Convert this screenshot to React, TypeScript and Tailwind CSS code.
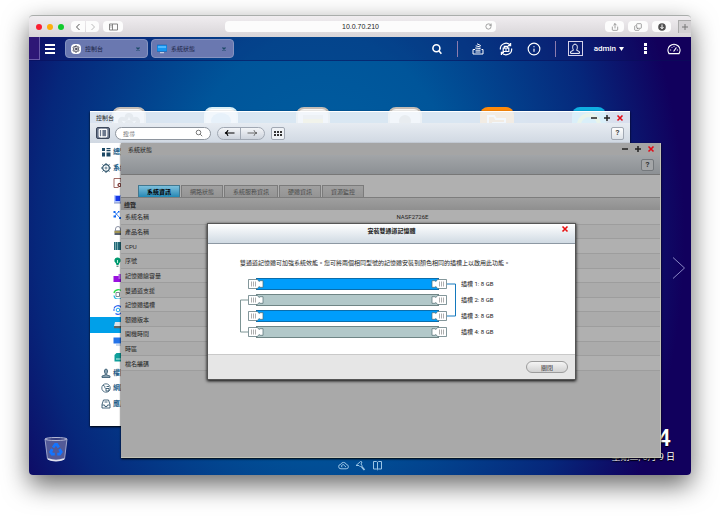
import type { ReactNode } from 'react';
import { Copy, Info, PanelLeft, RotateCw, Settings, Share } from 'lucide-react';

const systemRows = [
  { label: '系統名稱', value: 'NASF2726E' },
  { label: '產品名稱', value: '' },
  { label: 'CPU', value: '' },
  { label: '序號', value: '' },
  { label: '記憶體總容量', value: '' },
  { label: '雙通道支援', value: '' },
  { label: '記憶體插槽', value: '' },
  { label: '韌體版本', value: '' },
  { label: '開機時間', value: '' },
  { label: '時區', value: '' },
  { label: '檔名編碼', value: '' },
];

const tabs = ['系統資訊', '網路狀態', '系統服務資訊', '硬體資訊', '資源監控'];

const slots = ['插槽 1: 8 GB', '插槽 2: 8 GB', '插槽 3: 8 GB', '插槽 4: 8 GB'];

function Stroke({ d, className }: { d: string; className?: string }) {
  return (
    <svg viewBox="0 0 8 8" className={className} fill="none" stroke="currentColor">
      <path d={d} />
    </svg>
  );
}

function SafariBar() {
  return (
    <div className="flex h-[22px] items-center rounded-t border-t border-[#a9adab] bg-gradient-to-b from-[#f0edf0] to-[#d8d5d8]">
      <div className="flex w-[196px] shrink-0 items-center">
        <div className="flex gap-[5px] pl-[7px]">
          <span className="size-1.5 rounded-full bg-[#fb1f31]" />
          <span className="size-1.5 rounded-full bg-[#fdae0c]" />
          <span className="size-1.5 rounded-full bg-[#10ca2c]" />
        </div>
        <div className="ml-[7px] flex gap-px">
          <button aria-label="Back" className="flex h-[11px] w-3.5 items-center justify-center rounded-l-sm bg-[#fcfcfc] text-[#555]">
            <Stroke d="M5.500 1 2.500 4l3 3" className="size-2" />
          </button>
          <button aria-label="Forward" className="flex h-[11px] w-[13px] items-center justify-center rounded-r-sm bg-[#fcfcfc] text-[#bbb]">
            <Stroke d="m2.500 1 3 3-3 3" className="size-2" />
          </button>
        </div>
        <button aria-label="Sidebar" className="ml-1 flex h-[11px] w-5 items-center justify-center rounded-sm bg-[#fcfcfc] text-[#777]">
          <svg viewBox="0 0 9 8" className="h-2 w-[9px]" fill="none" stroke="currentColor" strokeWidth=".9">
            <path d="M.5 1h8v6h-8zM3.500 1v6M1.500 2.500h1M1.500 4h1" />
          </svg>
        </button>
      </div>
      <div className="relative flex h-[11px] flex-1 items-center">
        <input
          aria-label="Address"
          defaultValue="10.0.70.210"
          className="h-full w-full rounded-sm bg-[#fcfcfc] text-center font-['Liberation_Sans'] text-[7px] text-[#222]"
        />
        <button aria-label="Reload" className="absolute right-1 text-[#666]">
          <RotateCw className="size-[7px]" strokeWidth={2} />
        </button>
      </div>
      <div className="flex w-[195px] shrink-0 items-center justify-end gap-1">
        <button aria-label="Share" className="flex h-[11px] w-[19px] items-center justify-center rounded-sm bg-[#fcfcfc] text-[#777]">
          <Share className="size-2" strokeWidth={2} />
        </button>
        <button aria-label="Tabs" className="flex h-[11px] w-5 items-center justify-center rounded-sm bg-[#fcfcfc] text-[#777]">
          <Copy className="size-2 -scale-y-100" strokeWidth={2} />
        </button>
        <button aria-label="Downloads" className="flex h-[11px] w-[19px] items-center justify-center rounded-sm bg-[#fcfcfc]">
          <svg viewBox="0 0 8 8" className="size-2">
            <circle cx="4" cy="4" r="3.800" fill="#505050" />
            <path d="M4 1.500v4M2.500 4 4 5.800 5.500 4" stroke="#fff" fill="none" />
          </svg>
        </button>
        <button aria-label="New tab" className="ml-[3px] flex size-[13px] items-center justify-center self-end border-t border-l border-[#aaa] bg-[#d3d1d3] text-[#777]">
          <Stroke d="M4 1v6M1 4h6" className="size-2" />
        </button>
      </div>
    </div>
  );
}

function AppTab({ label, icon }: { label: string; icon: ReactNode }) {
  return (
    <div className="flex h-[19px] w-[83px] items-center rounded-sm border border-[#8593c0] bg-[#6a78b0] px-[5px] text-[#1a2344]">
      {icon}
      <span className="ml-1 flex-1 text-[6px]">{label}</span>
      <button aria-label={`Close ${label}`} className="text-[#1d4a68]">
        <Stroke d="m2.500 2.500 3 3m0-3-3 3" className="size-2 stroke-[1.300]" />
      </button>
    </div>
  );
}

function TopBar() {
  return (
    <header className="relative flex h-6 items-center border-b border-[#06105a]/50 bg-[#120055]/20 text-white">
      <span className="h-full w-[11px] border-r border-b border-[#6a5aa8] bg-[#2e1776]" />
      <button aria-label="Menu" className="mr-2 ml-[5px] flex h-3 w-3 flex-col justify-center gap-[2px]">
        <span className="h-[2px] w-[10px] bg-white" />
        <span className="h-[2px] w-[10px] bg-white" />
        <span className="h-[2px] w-[10px] bg-white" />
      </button>
      <div className="flex gap-[3px]">
        <AppTab
          label="控制台"
          icon={
            <span className="flex size-[10px] items-center justify-center rounded-sm bg-white text-[#223]">
              <Settings className="size-2" strokeWidth={2.5} />
            </span>
          }
        />
        <AppTab
          label="系統狀態"
          icon={
            <svg viewBox="0 0 10 10" className="size-[10px]">
              <rect x="0" y="1" width="10" height="6.500" rx=".6" fill="#1697f2" stroke="#125fae" strokeWidth=".6" />
              <path d="M1 2h8v2H1z" fill="#4fb8ff" />
              <path d="M3 8.700h4" stroke="#c5cbe0" strokeWidth="1.200" />
            </svg>
          }
        />
      </div>
      <div className="flex flex-1 items-center justify-end pr-[10px]">
        <button aria-label="Search">
          <svg viewBox="0 0 12 12" className="size-3" fill="none" stroke="currentColor" strokeWidth="1.600">
            <circle cx="5.400" cy="5.200" r="3.500" />
            <path d="m7.800 7.800 2.600 3" />
          </svg>
        </button>
        <span className="mx-[14px] h-4 w-px self-end bg-[#8c7cae]" />
        <button aria-label="Background tasks">
          <svg viewBox="0 0 12 12" className="size-3" fill="none" stroke="currentColor">
            <path d="M3 6.500H1v4.500h10V6.500H9.500" />
            <path d="M3.500 9h5M3.500 7.200h5M3.200 5l5.300.5M3.700 2.800l4.800 1.200M5 .8l3.800 1.800" />
          </svg>
        </button>
        <button aria-label="External devices" className="ml-[15px]">
          <svg viewBox="0 0 14 14" className="size-[14px]" fill="none" stroke="currentColor" strokeWidth="1.200">
            <path d="M1.400 7.500A5.600 5.600 0 0 1 11.300 3.300M12.600 6.500A5.600 5.600 0 0 1 2.700 10.700" />
            <path d="M11.600 1v2.600H9M2.400 13v-2.600H5" />
            <path d="M5.300 6V4.400h3.400V6" />
            <path d="M4.200 6.200h5.600v3.300H4.200zM6 8h2" />
          </svg>
        </button>
        <button aria-label="Notifications" className="ml-[14px]">
          <Info className="size-[14px]" strokeWidth={2} />
        </button>
        <span className="mr-3 ml-[14px] h-4 w-px self-end bg-[#8c7cae]" />
        <button className="flex items-center">
          <span className="flex size-[15px] items-center justify-center border border-[#d5d2ea]">
            <svg viewBox="0 0 12 12" className="size-3" fill="none" stroke="currentColor">
              <path d="M4.600 7.200C3.300 5.800 3 1.200 6 1.200s2.700 4.600 1.400 6l3 1.400v1.800H1.600V8.600z" />
            </svg>
          </span>
          <span className="ml-[11px] font-['Roboto'] text-[8px] font-medium">admin</span>
          <svg viewBox="0 0 5 4" className="ml-[3px] h-1 w-[5px]">
            <path d="M0 0h5L2.500 4z" fill="currentColor" />
          </svg>
        </button>
        <button aria-label="More" className="ml-5 flex flex-col gap-px">
          <span className="size-[3px] bg-white" />
          <span className="size-[3px] bg-white" />
          <span className="size-[3px] bg-white" />
        </button>
        <button aria-label="Dashboard" className="ml-5">
          <svg viewBox="0 0 14 12" className="h-3 w-[14px]" fill="none" stroke="currentColor" strokeWidth="1.200">
            <path d="M2 10.600A6 6 0 1 1 12 10.600z" />
            <path d="M3 7h1.200M4.500 4l.8.8M7 2.700v1.200M11 7H9.800" strokeWidth=".9" />
            <path d="m6.600 8.500 2.800-4" />
          </svg>
        </button>
      </div>
    </header>
  );
}

function DesktopIcons() {
  return (
    <div className="absolute top-[70px] left-[83px] flex gap-[58px]">
      <span className="flex size-[34px] justify-center rounded-lg border-2 border-[#c4bcb5] bg-[#f8f6f4] pt-1 text-[#777]">
        <Settings className="size-6" strokeWidth={4} />
      </span>
      <span className="flex size-[34px] justify-center rounded-lg border-2 border-[#d9eef5] bg-white pt-1">
        <span className="h-4 w-5 rounded-[50%] bg-[#8ebfe9]" />
      </span>
      <span className="flex size-[34px] justify-center rounded-lg border-2 border-[#c4bcb5] bg-[#f8f6f4] pt-1.5">
        <span className="h-4 w-5 border-t-4 border-[#c8c0b4] bg-[#f0d050]" />
      </span>
      <span className="flex size-[34px] justify-center rounded-lg border-2 border-[#c4bcb5] bg-[#f8f6f4] pt-1.5">
        <span className="size-3 rounded-full bg-[#968c88]" />
      </span>
      <span className="flex size-[34px] justify-center rounded-lg bg-[#ff8a0a] pt-2 text-white">
        <svg viewBox="0 0 20 14" className="h-3.5 w-5" fill="none" stroke="currentColor" strokeWidth="2">
          <path d="M1 13V1h6l2 3h9v9M4 13l2-5h13" />
        </svg>
      </span>
      <span className="flex size-[34px] justify-center rounded-lg bg-[#10aee0] pt-1.5">
        <span className="size-6 rounded-full border-4 border-[#a4e04c]" />
      </span>
    </div>
  );
}

function WindowButtons() {
  return (
    <div className="flex gap-[5px] text-[#222]">
      <button aria-label="Minimize">
        <Stroke d="M1 4h6" className="size-2 stroke-[1.500]" />
      </button>
      <button aria-label="Maximize">
        <Stroke d="M1 4h6M4 1v6" className="size-2 stroke-[1.500]" />
      </button>
      <button aria-label="Close" className="text-[#e30b17]">
        <Stroke d="m1.500 1.500 5 5m0-5-5 5" className="size-2 stroke-[1.600]" />
      </button>
    </div>
  );
}

const sidebarItems: { label?: string; icon: ReactNode; active?: boolean }[] = [
  {
    label: '總覽',
    icon: <path d="M1 1h3v3H1zM5.500 1h4v1.200h-4zM5.500 3h4v1.200h-4zM1 5.500h3v4H1zM5.500 5.500h4v4h-4z" fill="#1d4965" />,
  },
  {
    label: '系統設定',
    icon: (
      <g fill="none" stroke="#31566d">
        <circle cx="5" cy="5" r="3.300" strokeWidth="1.200" />
        <circle cx="5" cy="5" r="1" strokeWidth=".7" />
        <path d="M5 0v1.500M5 8.500V10M0 5h1.500M8.500 5H10M1.500 1.500l1 1M7.500 7.500l1 1M8.500 1.500l-1 1M2.500 7.500l-1 1" />
      </g>
    ),
  },
  {
    icon: (
      <g fill="none" stroke="#8a4640">
        <path d="M5.500 9.500H1v-9h7V4" strokeWidth=".8" />
        <circle cx="6.500" cy="7" r="1.500" stroke="#71241f" strokeWidth="1.200" />
      </g>
    ),
  },
  {
    icon: (
      <g>
        <rect x="1" y="1" width="8" height="8" rx="1" fill="#b4c8ff" />
        <path d="M2.500 2H7v5H2.500z" fill="#1739e8" />
        <path d="M1 9h8" stroke="#8898c0" />
      </g>
    ),
  },
  {
    icon: (
      <g fill="none" stroke="#1268f0">
        <path d="M1.500 2 7 8M5.500 1.500 1.500 6.500" strokeWidth=".8" />
        <path d="M.5 1h2v2h-2zM5 1h1.500v1.500H5zM.5 5.500H3v2H.5zM6 7h2v2H6z" fill="#1268f0" stroke="none" />
      </g>
    ),
  },
  {
    icon: (
      <g>
        <path d="M2.500 4.500V3a2.500 2.500 0 0 1 5 0v1.500" fill="none" stroke="#8c93a5" />
        <path d="M1.500 4.500h8V9h-8z" fill="#59616e" />
        <path d="M1.500 6h8" stroke="#e8c83a" />
      </g>
    ),
  },
  {
    icon: (
      <g>
        <path d="M1 1h9v8H1z" fill="#236a78" />
        <path d="M2.500 1v8M4.500 1v8" stroke="#75a7ac" />
      </g>
    ),
  },
  {
    icon: (
      <g>
        <path d="M4.500.5a3 3 0 0 0-1.800 5.500L3.500 8h2l.8-2A3 3 0 0 0 4.500.5z" fill="#009b70" />
        <path d="M3.500 9.200h2" stroke="#405e57" />
        <path d="M4.500 3v3" stroke="#b8f0dc" />
      </g>
    ),
  },
  {
    icon: (
      <g>
        <path d="M.5 3h9v6h-9z" fill="#9a10e0" />
        <path d="M5.500 1H10v5H5.500z" fill="#b965ec" />
      </g>
    ),
  },
  {
    icon: (
      <g fill="none">
        <path d="M1 4A4.500 4 0 0 1 9.500 3" stroke="#2edc4f" strokeWidth="1.300" />
        <path d="M1 6.500A4.500 4 0 0 0 9.500 8" stroke="#31b9e5" strokeWidth="1.300" />
        <path d="M3 3.500h3.500v4H3z" stroke="#7d8a96" />
      </g>
    ),
  },
  {
    icon: (
      <g fill="none" stroke="#2e62ee">
        <path d="M1 3.500A4.300 4.300 0 1 1 2.500 8.500M0 5h2" strokeWidth="1.200" />
        <circle cx="5" cy="5" r="1.800" stroke="#1fa8f4" />
      </g>
    ),
  },
  {
    active: true,
    icon: (
      <g>
        <path d="M2 2h8v4H1z" fill="#dde3e8" />
        <path d="M1 6h9v2.200H1z" fill="#63645e" />
      </g>
    ),
  },
  {
    icon: (
      <g>
        <path d="M.5 1.500H10v6H.5z" fill="#2473e8" />
        <path d="M3 9h5" stroke="#9db6d8" />
      </g>
    ),
  },
  {
    icon: (
      <g>
        <path d="M1.500 3 3.500 1H10v8.500H1.500z" fill="#109f9b" />
        <path d="M3 7h5" stroke="#c6f2ef" />
      </g>
    ),
  },
  {
    label: '權限設定',
    icon: (
      <path d="M5 1c2 0 2 3.500.7 4.800V7L9 8v1.500H1V8l3.300-1V5.800C3 4.500 3 1 5 1z" fill="#88a0af" stroke="#31566d" strokeWidth=".8" />
    ),
  },
  {
    label: '網路服務',
    icon: (
      <g fill="none" stroke="#31566d">
        <circle cx="5" cy="5" r="4.200" strokeWidth=".8" />
        <path d="M2 2.500c3 0 1 2.500 2.500 3M5.500 3.500H8M5 8V5.500h3V8z" strokeWidth=".9" />
      </g>
    ),
  },
  {
    label: '應用服務',
    icon: (
      <g fill="none" stroke="#31566d" strokeWidth=".9">
        <path d="M2.500 1h5L9 5.500V9H1V5.500z" />
        <path d="M1 6h2.500l.5 1.500h2L6.500 6H9M3.500 3h3" />
      </g>
    ),
  },
];

function ControlPanelWindow() {
  return (
    <section className="absolute top-[74px] left-[61px] flex h-[315px] w-[540px] flex-col shadow-[0_1px_2px_#000]">
      <div className="flex h-3 shrink-0 items-center justify-between border-t border-white bg-[#f1f6fc]/90 px-[6px] text-[6px] text-[#222]">
        <h2>控制台</h2>
        <WindowButtons />
      </div>
      <div className="flex h-5 shrink-0 items-center bg-gradient-to-b from-[#e7ecf2] to-[#d0d8e2] px-[6px]">
        <button aria-label="Toggle sidebar" className="flex h-3 w-3.5 items-center justify-center rounded-xs border border-[#3b4659] bg-[#6c788d] text-white">
          <PanelLeft className="size-2.5" strokeWidth={3} />
        </button>
        <label className="ml-[5px] flex h-[13px] w-24 items-center rounded-full border border-[#8e959e] bg-white px-[7px]">
          <input type="text" placeholder="搜尋" aria-label="搜尋" className="w-full min-w-0 text-[6px] placeholder:text-[#777]" />
          <svg viewBox="0 0 8 8" className="size-2 shrink-0" fill="none" stroke="#777">
            <circle cx="3.500" cy="3.500" r="2.300" />
            <path d="m5.200 5.200 2 2" />
          </svg>
        </label>
        <div className="ml-[6px] flex h-[13px] overflow-hidden rounded-full border border-[#a1a8b3] bg-gradient-to-b from-[#f3f5f8] to-[#cdd3dc]">
          <button aria-label="Previous" className="flex w-[23px] items-center justify-center border-r border-[#a1a8b3] text-black">
            <svg viewBox="0 0 11 8" className="h-2 w-[11px]" fill="none" stroke="currentColor" strokeWidth="1.200">
              <path d="M1 4h9.500M4 1.200C3.500 3 2.500 3.700 1 4c1.500.3 2.500 1 3 2.800" />
            </svg>
          </button>
          <button aria-label="Next" className="flex w-[23px] items-center justify-center text-[#666]">
            <svg viewBox="0 0 11 8" className="h-2 w-[11px]" fill="none" stroke="currentColor">
              <path d="M.5 4H10M7 1.200C7.500 3 8.500 3.700 10 4c-1.500.3-2.500 1-3 2.800" />
            </svg>
          </button>
        </div>
        <button aria-label="View" className="ml-[6px] flex h-[13px] w-3.5 items-center justify-center rounded-xs border border-[#a1a8b3] bg-[#eef1f5]">
          <svg viewBox="0 0 8 5" className="h-[5px] w-2" fill="#333">
            <path d="M0 0h2v2H0zM3 0h2v2H3zM6 0h2v2H6zM0 3h2v2H0zM3 3h2v2H3zM6 3h2v2H6z" />
          </svg>
        </button>
        <button aria-label="Help" className="ml-auto flex size-[13px] items-center justify-center rounded-xs border border-[#a1a8b3] bg-gradient-to-b from-white to-[#dde2e8] font-['Roboto'] text-[8px] font-bold text-[#444]">
          ?
        </button>
      </div>
      <nav className="flex-1 bg-white pt-px">
        <ul className="flex h-[268px] flex-col text-[7px] font-bold text-[#1d5c87]">
          {sidebarItems.map((item, i) => (
            <li
              key={i}
              className={`flex min-h-0 flex-1 items-center ${item.active ? 'bg-[#00a0e9]' : ''} ${item.label ? 'pl-[11px]' : 'pl-[23px]'}`}
            >
              <svg viewBox="0 0 10 10" className="size-[10px] shrink-0">
                {item.icon}
              </svg>
              {item.label && (
                <a href="#" className="ml-[2px] leading-3">
                  {item.label}
                </a>
              )}
            </li>
          ))}
        </ul>
      </nav>
    </section>
  );
}

function SystemStatusWindow() {
  return (
    <section className="absolute top-[106px] left-[92px] flex h-[315px] w-[540px] flex-col border-r border-b border-[#c2c2b4] bg-[#a9a9a9] shadow-[0_1px_2px_#000]">
      <div className="flex h-3 shrink-0 items-center justify-between bg-[#a5a5a5] pr-[5px] pl-[7px] text-[6px] text-[#222]">
        <h2>系統狀態</h2>
        <WindowButtons />
      </div>
      <div className="flex h-5 shrink-0 items-center justify-end border-b border-[#777] bg-gradient-to-b from-[#a2a5a8] to-[#8c9094] pr-[6px]">
        <button aria-label="Help" className="flex h-3 w-[13px] items-center justify-center rounded-xs border border-[#74787c] bg-[#a4a6a8] font-['Roboto'] text-[8px] font-bold text-[#333]">
          ?
        </button>
      </div>
      <div role="tablist" className="flex h-[23px] shrink-0 items-end gap-px border-b border-[#7d7d7d] bg-[#b0b0b0] pl-[17px] text-[6px]">
        {tabs.map((tab, i) => (
          <button
            key={tab}
            role="tab"
            aria-selected={i === 0}
            className={
              i === 0
                ? 'h-3 border border-b-0 border-[#41778f] bg-gradient-to-b from-[#7cc0dc] to-[#2088b4] px-2 font-bold text-black'
                : 'h-3 border border-b-0 border-[#7b7b7b] bg-gradient-to-b from-[#a0a0a0] to-[#949494] px-2 text-[#4c4c4c]'
            }
          >
            {tab}
          </button>
        ))}
      </div>
      <h3 className="flex h-3 shrink-0 items-center bg-gradient-to-b from-[#9f9f9f] to-[#8f8f8f] pl-[3px] text-[6px] font-bold text-[#222]">
        總覽
      </h3>
      <dl className="flex h-[161px] flex-col text-[6px] text-[#1f1f1f]">
        {systemRows.map((row) => (
          <div key={row.label} className="flex min-h-0 flex-1 items-center border-b border-[#9d9d9d] pl-1 odd:bg-[#b0b0b0] even:bg-[#ababab]">
            <dt className="w-1/2">{row.label}</dt>
            <dd className="pl-1">{row.value}</dd>
          </div>
        ))}
      </dl>
    </section>
  );
}

function Plug() {
  return (
    <g fill="#fff" stroke="#4f6a70" strokeWidth=".7">
      <path d="M8.500 3.500h9l1.500 2 1-.8h3v6.600h-3l-1-.8-1.500 2h-9z" />
      <path d="M11.500 5.500v5M13.500 5.500v5M15.500 5.500v5" stroke="#8b8b8b" />
    </g>
  );
}

function MemoryDiagram() {
  return (
    <svg viewBox="0 0 217 64" className="h-16 w-[217px] shrink-0" fill="none">
      <path d="M8 24H.5v32H8" stroke="#7c9494" />
      <path d="M207 8h8.500v32H207" stroke="#1479bd" />
      {[0, 1, 2, 3].map((i) => (
        <g key={i} transform={`translate(0 ${i * 16})`}>
          <rect x="16.500" y="2.500" width="182" height="11" fill={i % 2 ? '#b2c8c9' : '#009dfb'} stroke={i % 2 ? '#6f8585' : '#0b6dab'} />
          <Plug />
          <g transform="translate(215 0) scale(-1 1)">
            <Plug />
          </g>
        </g>
      ))}
    </svg>
  );
}

function MemoryDialog() {
  return (
    <section
      role="dialog"
      aria-labelledby="memory-title"
      className="absolute top-[186px] left-[178px] w-[369px] border border-[#555] bg-white text-[#222] shadow-[0_1px_3px_#000]"
    >
      <header className="relative h-5 border-b border-[#8d98a3] bg-gradient-to-b from-white to-[#d0dae3] pt-[2px]">
        <h2 id="memory-title" className="text-center text-[6px] leading-[9px] font-bold">
          安裝雙通道記憶體
        </h2>
        <button aria-label="Close" className="absolute top-[1px] right-[6px] text-[#e80f0f]">
          <Stroke d="m1.500 1.500 5 5m0-5-5 5" className="size-2 stroke-[1.600]" />
        </button>
      </header>
      <div className="px-8 py-[14px]">
        <p className="text-[6px] leading-[10px] whitespace-nowrap">
          雙通道記憶體可加強系統效能。您可將兩個相同型號的記憶體安裝到顏色相同的插槽上以啟用此功能。
        </p>
        <div className="mt-2 flex gap-1">
          <MemoryDiagram />
          <ul className="text-[6px] leading-4 whitespace-nowrap">
            {slots.map((slot) => (
              <li key={slot}>{slot}</li>
            ))}
          </ul>
        </div>
      </div>
      <footer className="flex h-[25px] items-center justify-end border-t border-[#c9c9c9] bg-[#e6e6e6] pr-[7px]">
        <button className="h-3 w-[42px] rounded-full border border-[#9c9c9c] bg-gradient-to-b from-[#f4f4f4] to-[#d2d2d2] text-[6px] leading-[9px] text-[#333]">
          關閉
        </button>
      </footer>
    </section>
  );
}

function Desktop() {
  return (
    <main className="relative h-[438px] overflow-hidden rounded-b bg-[radial-gradient(ellipse_55%_115%_at_44%_45%,#0062a3_0%,#00559a_40%,#06277b_78%,#11005d_100%)]">
      <TopBar />
      <DesktopIcons />

      {/* Recycle bin */}
      <svg viewBox="0 0 24 26" className="absolute bottom-[13px] left-[15px] h-[26px] w-6">
        <path d="m1 3 2.500 20q8.500 4 17 0L23 3z" fill="#535a97" stroke="#9da4cb" />
        <ellipse cx="12" cy="3" rx="11" ry="1.500" fill="#363d7e" stroke="#b5b9d6" />
        <path d="M4 23q8 3 16 0" stroke="#e0e2ef" strokeWidth="1.500" fill="none" />
        <g fill="none" stroke="#1374ff" strokeWidth="2.800">
          <path d="m9 11.500 2.300-3h1.500l2 3" />
          <path d="m15.500 13 1.700 3-1.500 2.200h-2.500" />
          <path d="M10.800 18.200H8l-1.300-2.200L8.300 13" />
        </g>
      </svg>

      {/* Clock */}
      <div className="absolute right-4 bottom-3 text-right text-white [text-shadow:0_1px_1px_#000]">
        <div className="pr-1 font-['Roboto'] text-[24px] leading-[26px] font-medium">10:24</div>
        <div className="text-[9px] leading-3">星期二, 6月 9 日</div>
      </div>

      <button aria-label="Next page" className="absolute top-[220px] right-[5px] text-[#8987c4]">
        <svg viewBox="0 0 14 22" className="h-[22px] w-[14px]" fill="none" stroke="currentColor">
          <path d="m1 .5 11.500 10.500L1 21.500" />
        </svg>
      </button>

      <div className="absolute inset-x-0 bottom-1 flex justify-center gap-[6px] text-[#9bc5e6]">
        <button aria-label="Cloud">
          <svg viewBox="0 0 11 11" className="size-[11px]" fill="none" stroke="currentColor">
            <path d="M3 8.800a2.200 2.200 0 0 1-.3-4.400 3 3 0 0 1 5.700.2 2.100 2.100 0 0 1-.2 4.200zM4 7.200a1.500 1.500 0 1 1 2.500-1.500l1.500 1.300" />
          </svg>
        </button>
        <button aria-label="Tools">
          <svg viewBox="0 0 11 11" className="size-[11px]" fill="none" stroke="currentColor">
            <path d="m1 5.500 4.500-4 1.500.5-1 2 1 1.500-1.500 1.500L4 5.500z" />
            <path d="m6.500 6.500 3 3.500" strokeWidth="1.800" />
          </svg>
        </button>
        <button aria-label="Guide">
          <svg viewBox="0 0 11 11" className="size-[11px]" fill="none" stroke="currentColor">
            <path d="M1.500 1.500h3l1 .8 1-.8h3v7.500h-3l-1 .8-1-.8h-3zM5.500 2v7.500" />
          </svg>
        </button>
      </div>

      <ControlPanelWindow />
      <SystemStatusWindow />
      <MemoryDialog />
    </main>
  );
}

export default function App() {
  return (
    <div className="min-h-screen bg-white px-[29px] pt-[15px] pb-[43px] font-['Roboto','Noto_Sans_CJK_TC',sans-serif]">
      <div className="rounded shadow-[0_10px_26px_rgba(0,0,0,0.6)]">
        <SafariBar />
        <Desktop />
      </div>
    </div>
  );
}
